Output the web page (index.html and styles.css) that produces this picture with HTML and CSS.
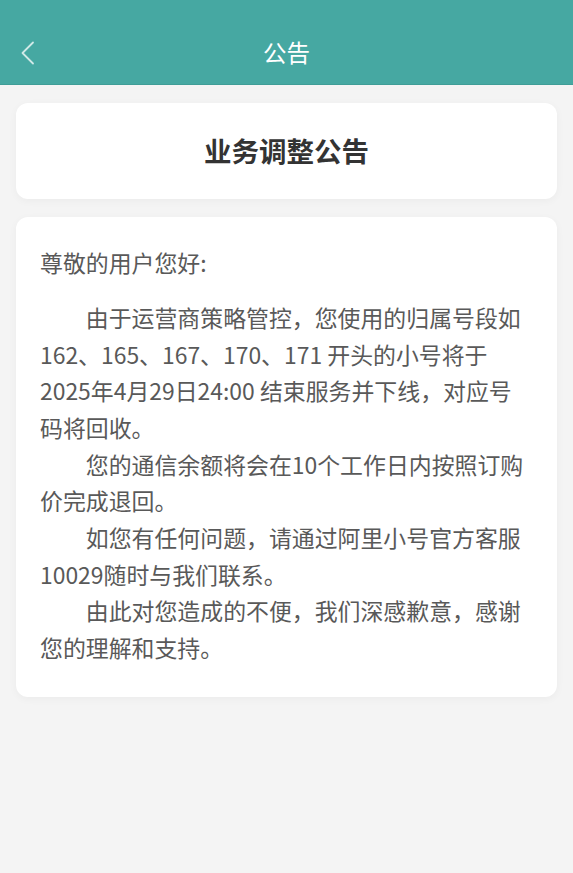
FILE: index.html
```html
<!DOCTYPE html>
<html lang="zh-CN">
<head>
<meta charset="utf-8">
<title>公告</title>
<link rel="stylesheet" href="styles.css">
</head>
<body>
<header class="topbar">
  <span class="back">
    <svg width="16" height="24" viewBox="0 0 16 24"><path d="M13 1.5 L2.5 12 L13 22.5" fill="none" stroke="rgba(255,255,255,0.75)" stroke-width="1.8" stroke-linecap="round" stroke-linejoin="round"/></svg>
  </span>
  <h1 class="topbar-title">公告</h1>
</header>
<main class="content">
  <section class="card title-card">
    <h2 class="notice-title">业务调整公告</h2>
  </section>
  <section class="card body-card">
    <p class="greeting">尊敬的用户您好:</p>
    <p class="para">由于运营商策略管控，您使用的归属号段如162、165、167、170、171 开头的小号将于2025年4月29日24:00 结束服务并下线，对应号码将回收。</p>
    <p class="para">您的通信余额将会在10个工作日内按照订购价完成退回。</p>
    <p class="para">如您有任何问题，请通过阿里小号官方客服10029随时与我们联系。</p>
    <p class="para">由此对您造成的不便，我们深感歉意，感谢您的理解和支持。</p>
  </section>
</main>
</body>
</html>
```

FILE: styles.css
```css
* { box-sizing: border-box; }
html, body {
  margin: 0;
  padding: 0;
}
body {
  background: #f4f4f4;
  font-family: "PingFang SC", "Noto Sans CJK SC", "Noto Sans", sans-serif;
  min-height: 873px;
}
.topbar {
  position: relative;
  height: 85px;
  background: #46a8a2;
  display: flex;
  align-items: center;
  justify-content: center;
  padding-top: 22px;
  border-bottom: 1px solid #3f9d97;
}
.back {
  position: absolute;
  left: 20px;
  top: 41px;
  width: 16px;
  height: 24px;
  display: block;
}
.back svg { display: block; }
.topbar-title {
  margin: 0;
  color: #ffffff;
  font-size: 23.5px;
  font-weight: 400;
  line-height: 1;
}
.content {
  padding: 18px 16px;
  display: flex;
  flex-direction: column;
  gap: 18px;
}
.card {
  background: #ffffff;
  border-radius: 12px;
  box-shadow: 0 2px 8px rgba(0,0,0,0.04);
}
.title-card {
  height: 96px;
  display: flex;
  align-items: center;
  justify-content: center;
}
.notice-title {
  margin: 0;
  font-size: 27.5px;
  font-weight: 700;
  color: #333333;
  line-height: 1;
}
.body-card {
  padding: 27px 24px 31px;
  color: #595959;
  font-size: 22.9px;
  line-height: 36.67px;
}
.greeting {
  margin: 0 0 18.3px;
}
.para {
  margin: 0;
  text-indent: 2em;
}
```
